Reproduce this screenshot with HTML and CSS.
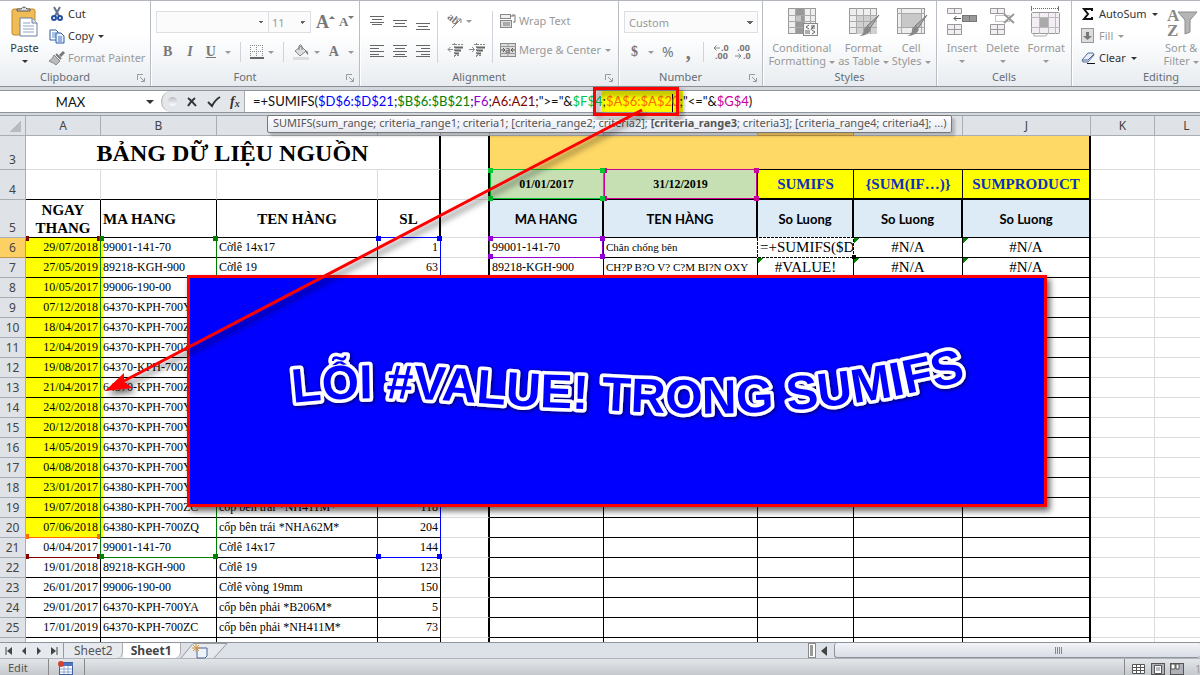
FILE: index.html
```html
<!DOCTYPE html>
<html lang="vi">
<head>
<meta charset="utf-8">
<title>Sheet1</title>
<link rel="stylesheet" href="styles.css">
</head>
<body>
<header class="ribbon">
  <section class="group g-clipboard">
    <div class="group-body">
      <button class="big dark"><svg width="28" height="32" viewBox="0 0 28 32"><rect x="1" y="3" width="23" height="26" rx="2" fill="#efbc55" stroke="#c08a2c"/><path d="M6 5h13v-2h-3q-3-4-6 0h-4z" fill="#ddd" stroke="#555"/><path d="M9 12h12l5 5v13H9z" fill="#fff" stroke="#6d7f9c"/><path d="M21 12v5h5" fill="#dbe4f2" stroke="#6d7f9c"/><path d="M12 17h7M12 20h11M12 23h11M12 26h11" stroke="#8da5c8"/></svg><span>Paste</span><i class="caret"></i></button>
      <div class="stack">
        <button class="small dark"><svg width="16" height="16" viewBox="0 0 16 16"><path d="M5 1l5 9M11 1l-5 9" stroke="#63718a" stroke-width="2"/><circle cx="5" cy="12" r="2" fill="none" stroke="#2450a4" stroke-width="2"/><circle cx="11" cy="12" r="2" fill="none" stroke="#2450a4" stroke-width="2"/></svg>Cut</button>
        <button class="small dark"><svg width="16" height="16" viewBox="0 0 16 16"><path d="M1 2h6l2 2v8H1z" fill="#fff" stroke="#2e5aa8"/><path d="M3 5h4M3 7h4M3 9h4" stroke="#5b8bd0"/><path d="M7 5h5l3 3v7H7z" fill="#e8f0fb" stroke="#2e5aa8"/><path d="M9 9h4M9 11h4M9 13h4" stroke="#3f74c8"/></svg>Copy<i class="caret"></i></button>
        <button class="small"><svg width="16" height="16" viewBox="0 0 16 16"><path d="M10 5l4-4 2 2-4 4z" fill="#777"/><path d="M5 5l6 6-4 4q-2-2-7-4q4-2 5-6z" fill="#bbb" stroke="#888"/><path d="M7 4l5 5" stroke="#777" stroke-width="2"/></svg>Format Painter</button>
      </div>
    </div>
    <footer>Clipboard<svg class="launch" width="8" height="8" viewBox="0 0 8 8"><path d="M.5 6V.5H6M3 3l4 4M7.500 4v3.500H4" fill="none" stroke="currentColor"/></svg></footer>
  </section>

  <section class="group g-font">
    <div class="group-body rows">
      <div class="line">
        <select class="font-name" aria-label="Font"><option></option></select><select class="font-size" aria-label="Font size"><option>11</option></select>
        <button class="serif grow" aria-label="Grow font">A<i class="up"></i></button>
        <button class="serif shrink" aria-label="Shrink font">A<i class="caret"></i></button>
      </div>
      <div class="line tools font-tools">
        <button class="serif">B</button><button class="serif italic">I</button><button class="serif under">U</button><i class="caret"></i><i class="rule"></i>
        <button aria-label="Borders"><svg width="14" height="14" viewBox="0 0 14 14"><path d="M.5 0v13M6.500 0v13M12.500 0v13M0 .5h13M0 6.500h13" stroke="#888" stroke-dasharray="1 1"/><path d="M0 13h14" stroke="#666" stroke-width="2"/></svg></button><i class="caret"></i><i class="rule"></i>
        <button aria-label="Fill color"><svg width="17" height="17" viewBox="0 0 17 17"><path d="M2 7l6-5 5 5-6 5z" fill="#ddd" stroke="#888"/><path d="M6 6V2q2-3 3 1v3" fill="none" stroke="#777"/><path d="M12 6q4 1 3 5q-2-1-3-5z" fill="#777"/><path d="M0 13h16v3H0z" fill="#ddd"/></svg></button><i class="caret"></i>
        <button class="serif">A</button><i class="caret"></i>
      </div>
    </div>
    <footer>Font<svg class="launch" width="8" height="8" viewBox="0 0 8 8"><path d="M.5 6V.5H6M3 3l4 4M7.500 4v3.500H4" fill="none" stroke="currentColor"/></svg></footer>
  </section>

  <section class="group g-align">
    <div class="group-body align-body">
      <div class="align-grid">
        <svg width="14" height="14" viewBox="0 0 14 14"><path d="M0 1.500h14M2 4.500h10M0 7.500h14M2 9.500h10" stroke="#666"/></svg>
        <svg width="14" height="14" viewBox="0 0 14 14"><path d="M0 5.500h14M2 8.500h10M0 11.500h14" stroke="#666"/></svg>
        <svg width="14" height="14" viewBox="0 0 14 14"><path d="M0 8.500h14M2 11.500h10M0 14.500h14" stroke="#666"/></svg>
        <svg width="14" height="14" viewBox="0 0 14 14"><path d="M0 1.500h14M0 4.500h9M0 7.500h14M0 10.500h9M0 12.500h14" stroke="#666"/></svg>
        <svg width="14" height="14" viewBox="0 0 14 14"><path d="M0 1.500h14M2 4.500h10M0 7.500h14M2 10.500h10M0 12.500h14" stroke="#666"/></svg>
        <svg width="14" height="14" viewBox="0 0 14 14"><path d="M0 1.500h14M5 4.500h9M0 7.500h14M5 10.500h9M0 12.500h14" stroke="#666"/></svg>
      </div>
      <i class="rule tall"></i>
      <div class="indent">
        <button class="orient" aria-label="Orientation"><svg width="16" height="16" viewBox="0 0 16 16"><text class="ab" x="-1" y="9" transform="rotate(40 5 8)">ab</text><path d="M5 15L14 6M10 6h4v4" fill="none" stroke="#888"/></svg><i class="caret"></i></button>
        <div class="indent-row"><button aria-label="Decrease indent"><svg width="16" height="14" viewBox="0 0 16 14"><path d="M5 1.500h11M7 12.500h5M7.500 0v14" stroke="#888" stroke-dasharray="2 1"/><path d="M8 4.500h8M8 7.500h6M8 10.500h4" stroke="#666" stroke-width="2"/><path d="M1 6.500h5M3.500 4L1 6.500 3.500 9" fill="none" stroke="#888"/></svg></button>
        <button aria-label="Increase indent"><svg width="16" height="14" viewBox="0 0 16 14"><path d="M5 1.500h11M7 12.500h5M7.500 0v14" stroke="#888" stroke-dasharray="2 1"/><path d="M8 4.500h8M8 7.500h6M8 10.500h4" stroke="#666" stroke-width="2"/><path d="M0 6.500h5M3 4l2.500 2.500L3 9" fill="none" stroke="#888"/></svg></button></div>
      </div>
      <i class="rule tall"></i>
      <div class="wraps">
        <button class="small"><svg width="16" height="16" viewBox="0 0 16 16"><rect x=".5" y="1.500" width="10" height="4" fill="#eee" stroke="#888"/><rect x=".5" y="7.500" width="11" height="7" fill="#ddd" stroke="#888"/><path d="M3 10h7M3 12h7M12 2h3v7h-2M10 3h4" fill="none" stroke="#777"/></svg>Wrap Text</button>
        <button class="small"><svg width="16" height="16" viewBox="0 0 16 16"><rect x=".5" y="1.500" width="15" height="13" fill="#ddd" stroke="#888"/><path d="M0 4.500h16M0 11.500h16M8 1v3M8 12v3" stroke="#999"/><path d="M1 8h4M3 6l2 2-2 2M15 8h-4M13 6l-2 2 2 2" fill="none" stroke="#555"/><text class="tiny" x="5" y="11">a</text></svg>Merge &amp; Center<i class="caret"></i></button>
      </div>
    </div>
    <footer>Alignment<svg class="launch" width="8" height="8" viewBox="0 0 8 8"><path d="M.5 6V.5H6M3 3l4 4M7.500 4v3.500H4" fill="none" stroke="currentColor"/></svg></footer>
  </section>

  <section class="group g-number">
    <div class="group-body rows">
      <div class="line"><select class="number-format" aria-label="Number format"><option>Custom</option></select></div>
      <div class="line tools number-tools"><button class="serif">$</button><i class="caret"></i><button class="percent">%</button><button class="serif comma">,</button><i class="rule"></i>
        <button class="dec" aria-label="Increase decimal"><svg width="17" height="16" viewBox="0 0 17 16"><path d="M1 4h6M3.500 1.500L1 4l2.500 2.500" fill="none" stroke="#888"/><text class="tiny" x="8" y="7">.0</text><text class="tiny" x="2" y="15">.00</text></svg></button>
        <button class="dec" aria-label="Decrease decimal"><svg width="17" height="16" viewBox="0 0 17 16"><path d="M0 12h6M3.500 9.500L6 12l-2.500 2.500" fill="none" stroke="#888"/><text class="tiny" x="2" y="7">.00</text><text class="tiny" x="8" y="15">.0</text></svg></button>
      </div>
    </div>
    <footer>Number<svg class="launch" width="8" height="8" viewBox="0 0 8 8"><path d="M.5 6V.5H6M3 3l4 4M7.500 4v3.500H4" fill="none" stroke="currentColor"/></svg></footer>
  </section>

  <section class="group g-styles">
    <div class="group-body centered">
      <button class="big"><svg width="32" height="32" viewBox="0 0 32 32"><rect x="2.500" y="2.500" width="27" height="25" fill="#eee" stroke="#999"/><path d="M9 2h9v26H9z" fill="#999"/><path d="M9 9h6v6H9z" fill="#c4c4c4"/><path d="M2 9.500h28M2 15.500h28M2 21.500h28M9.500 2v26M18.500 2v26M24.500 2v26" stroke="#aaa"/><rect x="17.500" y="17.500" width="14" height="12" fill="#f6f6f6" stroke="#888"/><path d="M23 19l-3 2 3 2M19 25h5M19 27h5M25 20h4M25 22h4M28 19l-3 5M26 24l3 2-3 2" fill="none" stroke="#666"/></svg><span>Conditional<br>Formatting<i class="caret"></i></span></button>
      <button class="big"><svg width="32" height="32" viewBox="0 0 32 32"><rect x="2.500" y="2.500" width="27" height="25" fill="#eee" stroke="#999"/><path d="M9 9h21v19H9z" fill="#d0d0d0"/><path d="M2 9.500h28M2 15.500h28M2 21.500h28M9.500 2v26M16.500 2v26M23.500 2v26" stroke="#aaa"/><path d="M32 9l-9 13-3-2z" fill="#aaa" stroke="#777"/><path d="M20 20l4 3q-2 7-12 7 5-2 5-6 0-3 3-4z" fill="#888"/></svg><span>Format<br>as Table<i class="caret"></i></span></button>
      <button class="big"><svg width="32" height="32" viewBox="0 0 32 32"><rect x="2.500" y="2.500" width="27" height="25" fill="#eee" stroke="#999"/><path d="M7 8h19v13H7z" fill="#c8c8c8"/><path d="M2 7.500h28M2 21.500h28M6.500 2v26M26.500 2v26" stroke="#aaa"/><path d="M32 9l-9 13-3-2z" fill="#aaa" stroke="#777"/><path d="M20 20l4 3q-2 7-12 7 5-2 5-6 0-3 3-4z" fill="#888"/></svg><span>Cell<br>Styles<i class="caret"></i></span></button>
    </div>
    <footer>Styles</footer>
  </section>

  <section class="group g-cells">
    <div class="group-body centered">
      <button class="big"><svg width="32" height="32" viewBox="0 0 32 32"><path d="M1.500 2.500h14v5h-14zM8.500 2v6M1.500 18.500h14v10h-14zM1.500 23.500h14M8.500 18v11" fill="#f3eef3" stroke="#999"/><rect x="16.500" y="9.500" width="14" height="6" fill="#999" stroke="#777"/><path d="M23.500 9v7" stroke="#777"/><path d="M8 12.500h7M10.500 10L8 12.500l2.500 2.500" fill="none" stroke="#555"/></svg><span>Insert</span><i class="caret"></i></button>
      <button class="big"><svg width="32" height="32" viewBox="0 0 32 32"><path d="M3.500 2.500h14v5h-14zM10.500 2v6M3.500 18.500h14v10h-14zM3.500 23.500h14M10.500 18v11" fill="#f3eef3" stroke="#999"/><path d="M8.500 9.500h14v6h-14z" fill="none" stroke="#888" stroke-dasharray="1 1"/><path d="M17 8l10 9M27 8L17 17" stroke="#999" stroke-width="2"/></svg><span>Delete</span><i class="caret"></i></button>
      <button class="big"><svg width="32" height="32" viewBox="0 0 32 32"><path d="M1 2.500h28" stroke="#666" stroke-dasharray="1 1"/><path d="M1.500 0v5M28.500 0v5" stroke="#777"/><rect x="1.500" y="6.500" width="28" height="21" rx="1" fill="#f3eef3" stroke="#999"/><path d="M1 11.500h29M1 21.500h29M9.500 7v21M18.500 7v21M25.500 7v21" stroke="#bbb"/><path d="M10 12h8v9h-8z" fill="#aaa"/><path d="M4 28v2h11q2 0 2-2" fill="none" stroke="#aaa"/></svg><span>Format</span><i class="caret"></i></button>
    </div>
    <footer>Cells</footer>
  </section>

  <section class="group g-edit">
    <div class="group-body">
      <div class="stack">
        <button class="small dark"><svg width="14" height="14" viewBox="0 0 14 14"><path d="M11 4V2H3l4 5-4 5h8v-2" fill="none" stroke="#111" stroke-width="2"/></svg>AutoSum<i class="caret"></i></button>
        <button class="small"><svg width="14" height="16" viewBox="0 0 14 16"><rect x=".5" y=".5" width="12" height="14" fill="#ddd" stroke="#999"/><path d="M5 4h3v4h3l-4.500 4L2 8h3z" fill="#777"/></svg>Fill<i class="caret"></i></button>
        <button class="small dark"><svg width="14" height="14" viewBox="0 0 14 14"><path d="M1 9l6-7h5l1 2-6 7H2z" fill="#e9edf8" stroke="#556a9a"/><path d="M1 9h6l6-6" fill="none" stroke="#556a9a"/><path d="M6 12.500h8" stroke="#111"/></svg>Clear<i class="caret"></i></button>
      </div>
      <button class="big"><svg width="32" height="32" viewBox="0 0 32 32"><text class="az" x="2" y="15">A</text><text class="az" x="2" y="30">Z</text><path d="M13 6h19l-7 8v12l-5 2V14z" fill="#b5b5b5" stroke="#8a8a8a"/></svg><span>Sort &amp;<br>Filter<i class="caret"></i></span></button>
    </div>
    <footer>Editing</footer>
  </section>
</header>

<div class="formula-bar">
  <input class="name-box" value="MAX" aria-label="Name box"><i class="caret name-caret"></i>
  <div class="fx">
    <i class="knob"></i>
    <button aria-label="Cancel"><svg width="12" height="12" viewBox="0 0 12 12"><path d="M2 2q4 3 8 8M9 2Q5 5 2 10" fill="none" stroke="#333" stroke-width="2"/></svg></button>
    <button aria-label="Enter"><svg width="14" height="12" viewBox="0 0 14 12"><path d="M1 6l4 4q3-6 8-9" fill="none" stroke="#333" stroke-width="2"/></svg></button>
    <button class="fx-btn"><em>f</em><small>x</small></button>
  </div>
  <div class="formula" role="textbox" aria-label="Formula bar">=+SUMIFS(<b class="c1">$D$6:$D$21</b>;<b class="c2">$B$6:$B$21</b>;<b class="c3">F6</b>;<b class="c4">A6:A21</b>;"&gt;="&amp;<b class="c5">$F$4</b><span class="mark">;<b class="c6">$A$6:$A$2<i class="cursor"></i>0</b>;</span>"&lt;="&amp;<b class="c7">$G$4</b>)</div>
  <div class="hint">SUMIFS(sum_range; criteria_range1; criteria1; [criteria_range2; criteria2]; <b>[criteria_range3</b>; criteria3]; [criteria_range4; criteria4]; ...)</div>
</div>

<main class="sheet">
<table>
<colgroup><col class="w-n"><col class="w-a"><col class="w-b"><col class="w-c"><col class="w-d"><col class="w-e"><col class="w-f"><col class="w-g"><col class="w-h"><col class="w-i"><col class="w-j"><col class="w-k"><col class="w-k"></colgroup>
<thead><tr class="heads"><th class="corner"></th><th>A</th><th>B</th><th>C</th><th>D</th><th>E</th><th>F</th><th>G</th><th class="hot">H</th><th>I</th><th>J</th><th>K</th><th>L</th></tr></thead>
<tbody>
<tr class="r3"><th>3</th><td class="title edge" colspan="4">BẢNG DỮ LIỆU NGUỒN</td><td class="gap"></td><td class="banner" colspan="5"></td><td></td><td></td></tr>
<tr class="r4"><th>4</th><td></td><td></td><td></td><td class="edge"></td><td class="gap"></td><td class="date">01/01/2017</td><td class="date">31/12/2019</td><td class="fn">SUMIFS</td><td class="fn">{SUM(IF…)}</td><td class="fn last">SUMPRODUCT</td><td></td><td></td></tr>
<tr class="r5"><th>5</th><td>NGAY<br>THANG</td><td class="left">MA HANG</td><td>TEN HÀNG</td><td class="edge">SL</td><td class="gap"></td><td class="sub">MA HANG</td><td class="sub">TEN HÀNG</td><td class="sub">So Luong</td><td class="sub">So Luong</td><td class="sub">So Luong</td><td></td><td></td></tr>
</tbody>
<tbody class="data">
<tr class="y"><th class="hot">6</th><td>29/07/2018</td><td>99001-141-70</td><td>Cờlê 14x17</td><td>1</td><td></td><td>99001-141-70</td><td>Chân chống bên</td><td class="editing">=+SUMIFS($D</td><td class="err">#N/A</td><td class="err">#N/A</td><td></td><td></td></tr>
<tr class="y"><th>7</th><td>27/05/2019</td><td>89218-KGH-900</td><td>Cờlê 19</td><td>63</td><td></td><td>89218-KGH-900</td><td>CH?P B?O V? C?M BI?N OXY</td><td class="err">#VALUE!</td><td class="err">#N/A</td><td class="err">#N/A</td><td></td><td></td></tr>
<tr class="y"><th>8</th><td>10/05/2017</td><td>99006-190-00</td><td></td><td></td><td></td><td></td><td></td><td></td><td></td><td></td><td></td><td></td></tr>
<tr class="y"><th>9</th><td>07/12/2018</td><td>64370-KPH-700YA</td><td></td><td></td><td></td><td></td><td></td><td></td><td></td><td></td><td></td><td></td></tr>
<tr class="y"><th>10</th><td>18/04/2017</td><td>64370-KPH-700ZC</td><td></td><td></td><td></td><td></td><td></td><td></td><td></td><td></td><td></td><td></td></tr>
<tr class="y"><th>11</th><td>12/04/2019</td><td>64370-KPH-700ZC</td><td></td><td></td><td></td><td></td><td></td><td></td><td></td><td></td><td></td><td></td></tr>
<tr class="y"><th>12</th><td>19/08/2017</td><td>64370-KPH-700ZC</td><td></td><td></td><td></td><td></td><td></td><td></td><td></td><td></td><td></td><td></td></tr>
<tr class="y"><th>13</th><td>21/04/2017</td><td>64370-KPH-700ZC</td><td></td><td></td><td></td><td></td><td></td><td></td><td></td><td></td><td></td><td></td></tr>
<tr class="y"><th>14</th><td>24/02/2018</td><td>64370-KPH-700YA</td><td></td><td></td><td></td><td></td><td></td><td></td><td></td><td></td><td></td><td></td></tr>
<tr class="y"><th>15</th><td>20/12/2018</td><td>64370-KPH-700YA</td><td></td><td></td><td></td><td></td><td></td><td></td><td></td><td></td><td></td><td></td></tr>
<tr class="y"><th>16</th><td>14/05/2019</td><td>64370-KPH-700YA</td><td></td><td></td><td></td><td></td><td></td><td></td><td></td><td></td><td></td><td></td></tr>
<tr class="y"><th>17</th><td>04/08/2018</td><td>64370-KPH-700YA</td><td></td><td></td><td></td><td></td><td></td><td></td><td></td><td></td><td></td><td></td></tr>
<tr class="y"><th>18</th><td>23/01/2017</td><td>64380-KPH-700YA</td><td></td><td></td><td></td><td></td><td></td><td></td><td></td><td></td><td></td><td></td></tr>
<tr class="y"><th>19</th><td>19/07/2018</td><td>64380-KPH-700ZC</td><td>cốp bên trái *NH411M*</td><td>118</td><td></td><td></td><td></td><td></td><td></td><td></td><td></td><td></td></tr>
<tr class="y"><th>20</th><td>07/06/2018</td><td>64380-KPH-700ZQ</td><td>cốp bên trái *NHA62M*</td><td>204</td><td></td><td></td><td></td><td></td><td></td><td></td><td></td><td></td></tr>
<tr><th>21</th><td>04/04/2017</td><td>99001-141-70</td><td>Cờlê 14x17</td><td>144</td><td></td><td></td><td></td><td></td><td></td><td></td><td></td><td></td></tr>
<tr><th>22</th><td>19/01/2018</td><td>89218-KGH-900</td><td>Cờlê 19</td><td>123</td><td></td><td></td><td></td><td></td><td></td><td></td><td></td><td></td></tr>
<tr><th>23</th><td>26/01/2017</td><td>99006-190-00</td><td>Cờlê vòng 19mm</td><td>150</td><td></td><td></td><td></td><td></td><td></td><td></td><td></td><td></td></tr>
<tr><th>24</th><td>29/01/2017</td><td>64370-KPH-700YA</td><td>cốp bên phải *B206M*</td><td>5</td><td></td><td></td><td></td><td></td><td></td><td></td><td></td><td></td></tr>
<tr><th>25</th><td>17/01/2019</td><td>64370-KPH-700ZC</td><td>cốp bên phải *NH411M*</td><td>73</td><td></td><td></td><td></td><td></td><td></td><td></td><td></td><td></td></tr>
<tr><th></th><td></td><td></td><td></td><td></td><td></td><td></td><td></td><td></td><td></td><td></td><td></td><td></td></tr>
</tbody>
</table>
</main>

<nav class="tabs">
  <div class="steps">
    <button aria-label="First sheet"><svg width="8" height="8" viewBox="0 0 8 8"><path d="M1 0v8" stroke="#444" stroke-width="1"/><path d="M7 0v8L2 4z" fill="#444"/></svg></button>
    <button aria-label="Previous sheet"><svg width="8" height="8" viewBox="0 0 8 8"><path d="M6 0v8L2 4z" fill="#444"/></svg></button>
    <button aria-label="Next sheet"><svg width="8" height="8" viewBox="0 0 8 8"><path d="M2 0v8l4-4z" fill="#444"/></svg></button>
    <button aria-label="Last sheet"><svg width="8" height="8" viewBox="0 0 8 8"><path d="M7 0v8" stroke="#444"/><path d="M1 0v8l5-4z" fill="#444"/></svg></button>
  </div>
  <button class="tab">Sheet2</button><button class="tab on">Sheet1</button>
  <button class="new-tab" aria-label="Insert sheet"><svg width="46" height="16" viewBox="0 0 46 16"><path d="M0 15L12 .5h34L33 15" fill="#e6e9ee" stroke="#999"/><path d="M16 5h10v8l-2 2h-8z" fill="#eef2fb" stroke="#4f6596"/><path d="M15 1v8M11 5h8M12 2l6 6M18 2l-6 6" stroke="#d79a3c"/></svg></button>
  <div class="scroll"><i class="split"></i><button aria-label="Scroll left"><svg width="6" height="10" viewBox="0 0 6 10"><path d="M6 0v10L0 5z" fill="#444"/></svg></button><div class="thumb"><i class="grip"></i></div></div>
</nav>

<footer class="status">
  <span class="mode">Edit</span>
  <button class="macro" aria-label="Record macro"><svg width="16" height="14" viewBox="0 0 16 14"><rect x="1.500" y="1.500" width="13" height="12" fill="#fff" stroke="#3f5f9e"/><path d="M1 2h14v3H1z" fill="#4d74bd"/><path d="M2 8h12M2 11h12M6 5v8M10 5v8" stroke="#8ca6d6"/><circle cx="3" cy="3" r="3" fill="#d1432f"/></svg></button>
  <div class="views">
    <button aria-label="Normal view"><svg width="14" height="12" viewBox="0 0 14 12"><path d="M.5 1.500h12v9H.5zM0 4.500h13M0 7.500h13M4.500 1v10M8.500 1v10" fill="#fff" stroke="#555"/></svg></button>
    <button aria-label="Page layout"><svg width="14" height="12" viewBox="0 0 14 12"><rect x=".5" y=".5" width="13" height="11" fill="#aeb2b8" stroke="#555"/><path d="M3.500 2.500h7v8h-7z" fill="#fff" stroke="#555"/><path d="M5 5h4M5 7h4" stroke="#777"/></svg></button>
    <button aria-label="Page break preview"><svg width="14" height="12" viewBox="0 0 14 12"><rect x=".5" y=".5" width="13" height="11" fill="#aeb2b8" stroke="#555"/><path d="M1 1h4v5H1zM6 1h3v5H6z" fill="#fff" stroke="#555"/></svg></button>
    <span class="zoom">100%</span>
  </div>
</footer>

<svg class="notes" width="1200" height="675" viewBox="0 0 1200 675">
  <defs>
    <filter id="soft" x="-10%" y="-10%" width="120%" height="130%"><feDropShadow dx="3" dy="4" stdDeviation="3" flood-color="#000" flood-opacity=".6"/></filter>
    <filter id="glow" x="-5%" y="-20%" width="110%" height="150%"><feDropShadow dx="1" dy="1" stdDeviation="2" flood-color="#000" flood-opacity=".7"/></filter>
    <path id="wave" d="M293 403C400 391 470 405 560 408S790 430 990 374"/>
  </defs>
  <g fill="none" shape-rendering="crispEdges">
    <path d="M26 537.500h74" stroke="#ff6a00"/><path d="M26 557.500h74" stroke="#800000"/>
    <path d="M100.500 238v319.500h116V238" stroke="#008000"/>
    <path d="M377.500 237.500h63v320h-63z" stroke="#00f"/>
    <path d="M489.500 237.500h113v20h-113z" stroke="#9400d3"/>
    <path d="M490.500 169.500h113v29h-113z" stroke="#00c82e"/>
    <path d="M604.500 169.500h152v29h-152z" stroke="#cc0099"/>
  </g>
  <g shape-rendering="crispEdges">
    <path d="M26 236h3v5h-3zM97 236h3v5h-3zM26 554h3v5h-3zM97 554h3v5h-3z" fill="#800000"/>
    <path d="M26 534h3v5h-3zM97 534h3v5h-3z" fill="#ff6a00"/>
    <path d="M99 236h5v5h-5zM213 236h5v5h-5zM99 554h5v5h-5zM213 554h5v5h-5z" fill="#008000"/>
    <path d="M376 236h5v5h-5zM437 236h5v5h-5zM376 554h5v5h-5zM437 554h5v5h-5z" fill="#00f"/>
    <path d="M488 236h5v5h-5zM600 236h5v5h-5zM488 254h5v5h-5zM600 254h5v5h-5z" fill="#9400d3"/>
    <path d="M604 168h3v5h-3zM754 168h5v5h-5zM604 196h3v5h-3zM754 196h5v5h-5z" fill="#cc0099"/>
    <path d="M488 168h5v5h-5zM600 168h5v5h-5zM488 196h5v5h-5zM600 196h5v5h-5z" fill="#00c82e"/>
    <path d="M757.500 237.500h96v20h-96z" fill="none" stroke="#fff" stroke-dasharray="1 3"/>
    <path d="M852 255h4v4h-4z"/>
  </g>
  <rect x="594.500" y="88.500" width="83" height="26" fill="none" stroke="#f00" stroke-width="3" filter="url(#soft)"/>
  <rect x="188.500" y="276.500" width="857" height="229" fill="#00f" stroke="#f00" stroke-width="3" filter="url(#soft)"/>
  <g filter="url(#soft)"><path d="M642 110L122 382" stroke="#f00" stroke-width="3"/><path d="M105 391l19-18v9l9 6z" fill="#f00"/></g>
  <text class="shout" filter="url(#glow)"><textPath href="#wave">LỖI #VALUE! TRONG SUMIFS</textPath></text>
</svg>
</body>
</html>
```
FILE: styles.css
```css
* { box-sizing: border-box; }
body {
  margin: 0;
  height: 100vh;
  display: flex;
  flex-direction: column;
  position: relative;
  overflow: hidden;
  font: 11px/14px "Noto Sans", sans-serif;
  color: #333;
  background: #d4d8dd;
}
button {
  border: 0;
  padding: 0;
  background: none;
  font: inherit;
  color: inherit;
  display: flex;
  align-items: center;
  white-space: nowrap;
}
svg { display: block; flex: none; overflow: visible; }
.caret, .up {
  display: inline-block;
  flex: none;
  border: 3px solid transparent;
  border-top-color: currentColor;
  border-bottom: 0;
  margin-left: 3px;
  vertical-align: middle;
}
.up { border-top: 0; border-bottom: 3px solid; border-left-color: transparent; border-right-color: transparent; }

/* Ribbon */
.ribbon {
  display: flex;
  height: 87px;
  flex: none;
  border-top: 1px solid #b1b5bb;
  border-bottom: 1px solid #8b9097;
  background: linear-gradient(#fff 40%, #e8ecf0);
  color: #999;
}
.group {
  display: flex;
  flex-direction: column;
  flex: none;
  border-right: 1px solid #b9bec6;
  box-shadow: 1px 0 #fff;
}
.group-body { display: flex; flex: 1; }
.group footer {
  position: relative;
  height: 17px;
  line-height: 15px;
  text-align: center;
  color: #666d78;
}
.g-clipboard footer, .g-font footer, .g-align footer, .g-number footer { padding-right: 20px; }
.launch { position: absolute; right: 5px; top: 5px; color: #999; }
.g-clipboard { width: 151px; }
.g-font { width: 209px; }
.g-align { width: 259px; }
.g-number { width: 144px; }
.g-styles { width: 174px; }
.g-cells { width: 135px; }
.g-edit { width: 178px; border: 0; }
.dark { color: #333; }
.big { flex-direction: column; padding-top: 5px; line-height: 13px; text-align: center; }
.big > span { padding-top: 3px; }
.big > .caret { margin: 6px 0 0; }
.g-clipboard .big { width: 49px; }
.stack { display: flex; flex-direction: column; gap: 6px; padding-top: 5px; }
.small { height: 16px; gap: 3px; }
.g-clipboard .small .caret, .g-edit .small .caret { margin-left: 1px; }
.g-edit .stack { padding-left: 9px; }
.g-edit .small { gap: 4px; }
.g-edit .big { margin-left: 6px; }
.centered { justify-content: center; gap: 3px; }
.g-cells .centered { gap: 8px; padding-left: 3px; }
.rows { flex-direction: column; padding: 10px 0 0 5px; gap: 8px; }
.line { display: flex; align-items: center; height: 22px; }
select {
  height: 22px;
  border: 1px solid #dcdfe4;
  font: 11px "Noto Sans", sans-serif;
  color: #999;
  padding: 0 4px;
  appearance: none;
  background: #fbfbfb no-repeat right 7px center / 3px 3px;
  background-image: linear-gradient(to bottom left, #666 50%, transparent 50%), linear-gradient(to bottom right, #666 50%, transparent 50%);
  background-position: right 7px center, right 4px center;
}
.font-name { width: 113px; }
.font-size { width: 43px; padding: 0 3px; margin-left: -1px; }
.number-format { width: 134px; }
.serif { font: bold 14px "Liberation Serif", serif; color: #777; }
.grow { font-size: 18px; margin-left: 5px; }
.grow i, .shrink i { margin: -10px 0 0; }
.shrink { font-size: 13px; margin-left: 4px; }
.italic { font-style: italic; }
.under { text-decoration: underline; }
.font-tools { padding-left: 7px; }
.font-tools .serif { width: 10px; margin-right: 13px; }
.font-tools .italic { margin-left: 2px; }
.font-tools .under, .font-tools .serif:nth-last-child(2) { margin-right: 5px; }
.font-tools .caret { margin: 0 9px 0 4px; }
.rule { width: 1px; height: 20px; background: #d0d4da; margin: 0 9px 0 0; flex: none; }
.rule.tall { height: 52px; margin: 10px 7px 0; }
.align-body { padding-left: 10px; }
.align-grid {
  display: grid;
  grid-template-columns: repeat(3, 14px);
  grid-template-rows: 14px 14px;
  column-gap: 9px;
  row-gap: 15px;
  padding-top: 14px;
}
.indent { width: 38px; margin-left: 2px; padding-top: 12px; display: flex; flex-direction: column; gap: 14px; }
.indent-row { display: flex; gap: 6px; }
.wraps { display: flex; flex-direction: column; gap: 13px; padding-top: 12px; }
.wraps .caret { margin-left: 1px; }
.ab { font: bold 11px "Liberation Serif", serif; fill: #777; }
.number-tools { padding-left: 7px; }
.number-tools .serif { width: 10px; }
.number-tools .caret { margin: 0 8px 0 7px; }
.percent { font-size: 14px; color: #777; margin-right: 12px; }
.number-tools .comma { font-size: 20px; height: 30px; margin-right: 7px; }
.dec { margin-right: 5px; }
.tiny { font: bold 9px "Noto Sans", sans-serif; fill: #777; }
.az { font: bold 17px "Liberation Serif", serif; fill: #888; }

/* Formula bar */
.formula-bar {
  position: relative;
  z-index: 1;
  display: flex;
  flex: none;
  height: 23px;
  margin: 3px 0 2px;
  border-top: 1px solid #8f959d;
  border-bottom: 1px solid #8f959d;
  background: #fff;
}
.name-box {
  width: 141px;
  border: 0;
  background: none;
  text-align: center;
  font: 13px Lato, sans-serif;
  color: #111;
  padding: 0;
}
.name-caret { margin: 9px 7px 0 5px; border-width: 4px 4px 0; color: #333; }
.fx {
  display: flex;
  align-items: center;
  gap: 9px;
  width: 84px;
  padding-left: 6px;
  background: #e3e6ea;
  border-left: 1px solid #aaa;
  border-right: 1px solid #aaa;
  border-radius: 11px 0 0 11px;
}
.knob { width: 9px; height: 9px; border-radius: 50%; background: linear-gradient(#b9bdc4, #fff); }
.fx-btn { font: bold 14px "Liberation Serif", serif; color: #333; }
.fx-btn small { font-size: 10px; font-style: italic; padding-top: 4px; }
.formula {
  flex: 1;
  padding-left: 8px;
  font: 13px/20px Lato, sans-serif;
  color: #111;
  white-space: nowrap;
}
.formula b { font-weight: 400; }
.formula .mark { background: #ff0; display: inline-block; }
.cursor { display: inline-block; width: 1px; height: 18px; margin-right: -1px; background: #000; vertical-align: middle; }
.c1 { color: #00f; }
.c2 { color: #008000; }
.c3 { color: #9400d3; }
.c4 { color: #800000; }
.c5 { color: #00c84b; }
.c6 { color: #ff6a00; }
.c7 { color: #cc0099; }
.hint {
  position: absolute;
  left: 267px;
  top: 24px;
  height: 18px;
  padding: 0 5px;
  line-height: 14px;
  white-space: nowrap;
  color: #555;
  background: linear-gradient(#fff, #e6e8f2);
  border: 1px solid #777;
  border-radius: 2px;
  box-shadow: 3px 3px 3px #0003;
}

/* Grid */
.sheet { flex: 1; overflow: hidden; background: #fff; border-top: 1px solid #9aa0a8; }
table { table-layout: fixed; width: 1219px; border-collapse: separate; border-spacing: 0; font: 12px/15px "Liberation Serif", serif; color: #000; }
.w-n { width: 26px; } .w-a { width: 75px; } .w-b { width: 116px; } .w-c { width: 161px; } .w-d { width: 63px; } .w-e { width: 49px; }
.w-f { width: 114px; } .w-g { width: 154px; } .w-h { width: 96px; } .w-i { width: 109px; } .w-j { width: 128px; } .w-k { width: 64px; }
th, td { padding: 0 2px; border: 0 solid #dadcdd; border-width: 0 1px 1px 0; white-space: nowrap; overflow: hidden; }
th { background: #dfe2e7; border-color: #a9adb4; font: 12px/15px "Noto Sans", sans-serif; color: #444; vertical-align: bottom; padding: 0 0 2px; }
.heads { height: 20px; }
.corner { background: linear-gradient(135deg, transparent 50%, #b8bcc2 50%) no-repeat right 4px bottom 3px / 11px 11px #dfe2e7; }
.hot { background: #fdd063; border-color: #c49a4a; }
.r3 { height: 34px; } .r4 { height: 30px; } .r5 { height: 38px; }
.data tr { height: 20px; }
td.edge { border-right: 2px solid #000; }
td.gap, .data td:nth-child(6) { border-right: 2px solid #000; }
td.title { font: bold 24px/30px "Liberation Serif", serif; text-align: center; }
td.banner { background: #ffd966; border-right: 2px solid #000; border-bottom: 1px solid #000; }
.r4 td:nth-child(-n+5) { border-bottom-color: #000; }
td.date, td.fn { text-align: center; font-weight: 700; border-color: #000; border-bottom-width: 2px; }
td.date { background: #c6e0b4; }
td.fn { background: #ff0; color: #0b2fc4; font-size: 15px; }
.r4 td.last, .r5 td:nth-child(11) { border-right-width: 2px; }
.r5 td { text-align: center; font: bold 15px/18px "Liberation Serif", serif; }
.r5 td:nth-child(-n+5) { border-color: #000; }
.r5 td.left { text-align: left; }
.r5 td.sub { background: #ddebf7; border-color: #000; border-right-width: 2px; font: bold 13px/18px Lato, sans-serif; }
.data td:nth-child(-n+5), .data td:nth-child(n+7):nth-child(-n+11) { border-right-color: #000; border-bottom-color: #000; }
.data td { vertical-align: bottom; padding-bottom: 2px; }
.data td:nth-child(6) { border-bottom-color: #dadcdd; }
.data td:nth-child(8) { font-size: 11px; }
.data td:nth-child(11) { border-right-width: 2px; }
.data td:nth-child(2), .data td:nth-child(5) { text-align: right; }
.data .y td:nth-child(2) { background: #ff0; }
.data .y td:nth-child(3) { box-shadow: inset 2px 0 #ff0; }
.data td.err { text-align: center; font-size: 15px; background: linear-gradient(135deg, #008000 4px, transparent 4px); }
.data td.editing { font-size: 15px; }

/* Sheet tabs */
.tabs { display: flex; flex: none; height: 17px; background: #dde1e8; border-top: 1px solid #8f959d; border-bottom: 1px solid #b0b4ba; }
.steps { display: flex; gap: 7px; padding: 0 5px 0 5px; border-right: 1px solid #999; background: #e6e9ee; }
.tab { font-size: 12px; padding: 0 9px 0 10px; background: #e6e9ee; border-right: 1px solid #aaa; border-radius: 0 0 6px 2px; color: #555; }
.tab.on { background: #fff; font-weight: 700; padding: 0 8px; color: #444; }
.scroll { margin-left: auto; display: flex; width: 392px; }
.split { width: 8px; border: 1px solid #888; background: #fff; box-shadow: inset 0 0 0 1px #fff, inset 4px 0 #999; }
.scroll button { padding: 0 7px 0 5px; }
.thumb { flex: 1; border-left: 1px solid #8f959d; border-bottom: 1px solid #8f959d; border-radius: 3px; background: linear-gradient(#f2f4f8, #d9dce5); padding: 4px 0 0 220px; }
.grip { display: block; width: 8px; height: 7px; background: repeating-linear-gradient(90deg, #888 0 1px, transparent 1px 2px); }

/* Status bar */
.status { display: flex; align-items: center; flex: none; height: 16px; background: linear-gradient(#e3e6e9, #c5c9cd); color: #555; }
.mode { width: 48px; padding: 2px 0 0 8px; }
.macro { border: solid #888; border-width: 0 1px; padding: 2px 10px 0 9px; height: 16px; }
.views { margin-left: auto; display: flex; gap: 5px; width: 76px; height: 16px; padding: 3px 0 0 7px; border-left: 1px solid #888; overflow: hidden; }
.views button { flex: none; }
.zoom { padding-left: 6px; color: #999; }

/* Annotations drawn over the workbook */
.notes { position: absolute; left: 0; top: 0; z-index: 2; pointer-events: none; }
.shout { font: bold 48px "Liberation Sans", sans-serif; fill: #00f; stroke: #fff; stroke-width: 7px; stroke-linejoin: round; paint-order: stroke; }
```
